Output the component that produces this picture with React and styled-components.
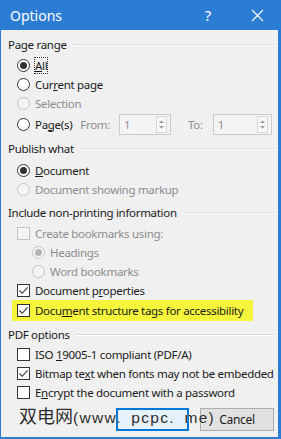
import React from "react";
import styled, { createGlobalStyle } from "styled-components";

const Global = createGlobalStyle`
  html, body { margin: 0; padding: 0; background: #f0f0f0; }
  body {
    font-family: "Noto Sans", "Open Sans", sans-serif;
    font-size: 11.5px;
    letter-spacing: -0.3px;
    color: #1a1a1a;
    white-space: nowrap;
  }
`;

const BLUE = "#2b7cd3";

const Window = styled.div`
  position: relative;
  width: 281px;
  height: 439px;
  box-sizing: border-box;
  background: #f0f0f0;
  border-left: 1px solid ${BLUE};
  border-right: 3px solid ${BLUE};
  border-bottom: 2px solid ${BLUE};
  display: flex;
  flex-direction: column;
  overflow: hidden;
`;

const TitleBar = styled.div`
  height: 30px;
  flex: none;
  background: ${BLUE};
  color: #fff;
  display: flex;
  align-items: center;
  padding-left: 9px;
  font-size: 14px;
  letter-spacing: 0;
`;

const TitleText = styled.div`
  flex: 1;
`;

const Help = styled.div`
  width: 14px;
  margin-right: 36px;
  font-size: 15px;
  text-align: center;
`;

const Close = styled.div`
  width: 14px;
  margin-right: 13px;
  display: flex;
  align-items: center;
`;

const Body = styled.div`
  flex: 1;
  padding: 5px 3px 0 7px;
  display: flex;
  flex-direction: column;
`;

const Group = styled.div`
  display: flex;
  flex-direction: column;
  margin-bottom: ${(p) => p.$after || 0}px;
`;

const Legend = styled.div`
  height: 19px;
  display: flex;
  align-items: center;
  gap: 6px;
  &::after {
    content: "";
    flex: 1;
    height: 1px;
    background: #dcdcdc;
    box-shadow: 0 1px 0 #fff;
  }
`;

const Items = styled.div`
  display: flex;
  flex-direction: column;
  padding-top: ${(p) => p.$top || 2}px;
`;

const Row = styled.div`
  height: ${(p) => p.$h || 19}px;
  display: flex;
  align-items: center;
  gap: 5px;
  padding-left: ${(p) => (p.$level === 2 ? 24 : 9)}px;
  color: ${(p) => (p.$disabled ? "#8d8d8d" : "#1a1a1a")};
`;

const Highlight = styled.div`
  height: 21px;
  margin-left: 4px;
  width: 241px;
  background: #f5f53c;
  display: flex;
  align-items: center;
  gap: 5px;
  padding-left: 5px;
  box-sizing: border-box;
`;

const RadioCircle = styled.span`
  width: 13px;
  height: 13px;
  flex: none;
  box-sizing: border-box;
  border-radius: 50%;
  border: 1px solid ${(p) => (p.$disabled ? "#c4c4c4" : "#333")};
  background: ${(p) => (p.$disabled ? "#f4f4f4" : "#fff")};
  display: flex;
  align-items: center;
  justify-content: center;
  &::after {
    content: "";
    display: ${(p) => (p.$on ? "block" : "none")};
    width: 7px;
    height: 7px;
    border-radius: 50%;
    background: ${(p) => (p.$disabled ? "#b4b4b4" : "#333")};
  }
`;

const Box = styled.span`
  width: 13px;
  height: 13px;
  flex: none;
  box-sizing: border-box;
  border: 1px solid ${(p) => (p.$disabled ? "#c4c4c4" : "#333")};
  background: ${(p) => (p.$disabled ? "#f4f4f4" : "#fff")};
  display: flex;
  align-items: center;
  justify-content: center;
`;

const Focus = styled.span`
  outline: 1px dotted #333;
  outline-offset: 0;
`;

const Key = styled.span`
  text-decoration: underline;
`;

const Dim = styled.span`
  color: #8d8d8d;
  margin-left: ${(p) => p.$ml || 0}px;
`;

const Spin = styled.div`
  width: ${(p) => p.$w}px;
  height: 21px;
  box-sizing: border-box;
  border: 1px solid #cbcbcb;
  background: #f4f4f4;
  display: flex;
  align-items: center;
  color: #8d8d8d;
  margin-left: ${(p) => p.$ml || 0}px;
`;

const SpinValue = styled.span`
  flex: 1;
  padding-left: 4px;
`;

const SpinArrows = styled.div`
  width: 9px;
  height: 15px;
  margin-right: 3px;
  border: 1px solid #d6d6d6;
  background: #f7f7f7;
  display: flex;
  align-items: center;
  justify-content: center;
`;

const Buttons = styled.div`
  margin-top: 6px;
  display: flex;
  gap: 11px;
  padding-left: 108px;
`;

const Button = styled.div`
  width: ${(p) => p.$w || 73}px;
  height: 23px;
  box-sizing: border-box;
  border: ${(p) => (p.$primary ? "2px solid #0078d7" : "1px solid #adadad")};
  background: ${(p) => (p.$primary ? "#e5f1fb" : "#e1e1e1")};
  display: flex;
  align-items: center;
  justify-content: center;
  font-size: 12px;
  color: #1a1a1a;
`;

const Watermark = styled.div`
  position: absolute;
  left: 18px;
  top: 406px;
  line-height: 1;
  font-family: "Noto Sans CJK SC", "Liberation Sans", sans-serif;
  font-size: 18px;
  letter-spacing: 0;
  color: #2a2a2a;
  text-shadow: 0 0 1px #fff;
  display: flex;
  align-items: baseline;
`;

const Latin = styled.span`
  font-family: "Liberation Sans", sans-serif;
  font-size: 15.5px;
  letter-spacing: 1.3px;
  word-spacing: 4px;
  white-space: pre;
`;

function Radio({ on, disabled }) {
  return <RadioCircle $on={on} $disabled={disabled} />;
}

function Check({ on, disabled }) {
  return (
    <Box $disabled={disabled}>
      {on && (
        <svg width="11" height="11" viewBox="0 0 11 11">
          <path d="M1.5 5.5 L4.2 8.3 L9.6 2.4" fill="none" stroke="#333" strokeWidth="1.1" />
        </svg>
      )}
    </Box>
  );
}

function Spinner({ width, ml }) {
  return (
    <Spin $w={width} $ml={ml}>
      <SpinValue>1</SpinValue>
      <SpinArrows>
        <svg width="7" height="13" viewBox="0 0 7 13">
          <path d="M1 5 L3.5 2.5 L6 5 Z M1 8 L3.5 10.5 L6 8 Z" fill="#9a9a9a" />
        </svg>
      </SpinArrows>
    </Spin>
  );
}

export default function App() {
  return (
    <>
      <Global />
      <Window>
        <TitleBar>
          <TitleText>Options</TitleText>
          <Help>?</Help>
          <Close>
            <svg width="13" height="13" viewBox="0 0 13 13">
              <path d="M1 1 L12 12 M12 1 L1 12" stroke="#fff" strokeWidth="1.2" />
            </svg>
          </Close>
        </TitleBar>
        <Body>
          <Group $after={4}>
            <Legend>Page range</Legend>
            <Items $top={2}>
              <Row>
                <Radio on />
                <Focus><Key>A</Key>ll</Focus>
              </Row>
              <Row>
                <Radio />
                <span>Cur<Key>r</Key>ent page</span>
              </Row>
              <Row $disabled>
                <Radio disabled />
                <span>Selection</span>
              </Row>
              <Row $h={22}>
                <Radio />
                <span>Pa<Key>g</Key>e(s)</span>
                <Dim $ml={3}>From:</Dim>
                <Spinner width={52} ml={4} />
                <Dim $ml={12}>To:</Dim>
                <Spinner width={59} ml={5} />
              </Row>
            </Items>
          </Group>
          <Group $after={4}>
            <Legend>Publish what</Legend>
            <Items $top={3}>
              <Row>
                <Radio on />
                <span><Key>D</Key>ocument</span>
              </Row>
              <Row $disabled>
                <Radio disabled />
                <span>Document showing markup</span>
              </Row>
            </Items>
          </Group>
          <Group $after={4}>
            <Legend>Include non-printing information</Legend>
            <Items $top={2}>
              <Row $disabled>
                <Check disabled />
                <span>Create bookmarks using:</span>
              </Row>
              <Row $disabled $level={2}>
                <Radio on disabled />
                <span>Headings</span>
              </Row>
              <Row $disabled $level={2}>
                <Radio disabled />
                <span>Word bookmarks</span>
              </Row>
              <Row>
                <Check on />
                <span>Document p<Key>r</Key>operties</span>
              </Row>
              <Highlight>
                <Check on />
                <span>Docu<Key>m</Key>ent structure tags for accessibility</span>
              </Highlight>
            </Items>
          </Group>
          <Group>
            <Legend>PDF options</Legend>
            <Items $top={1}>
              <Row>
                <Check />
                <span>ISO <Key>1</Key>9005-1 compliant (PDF/A)</span>
              </Row>
              <Row>
                <Check on />
                <span>Bitmap te<Key>x</Key>t when fonts may not be embedded</span>
              </Row>
              <Row>
                <Check />
                <span>E<Key>n</Key>crypt the document with a password</span>
              </Row>
            </Items>
          </Group>
          <Buttons>
            <Button $primary aria-label="OK" />
            <Button $w={74}>Cancel</Button>
          </Buttons>
        </Body>
        <Watermark>
          <span>双电网</span>
          <Latin>(www. pcpc. me)</Latin>
        </Watermark>
      </Window>
    </>
  );
}
